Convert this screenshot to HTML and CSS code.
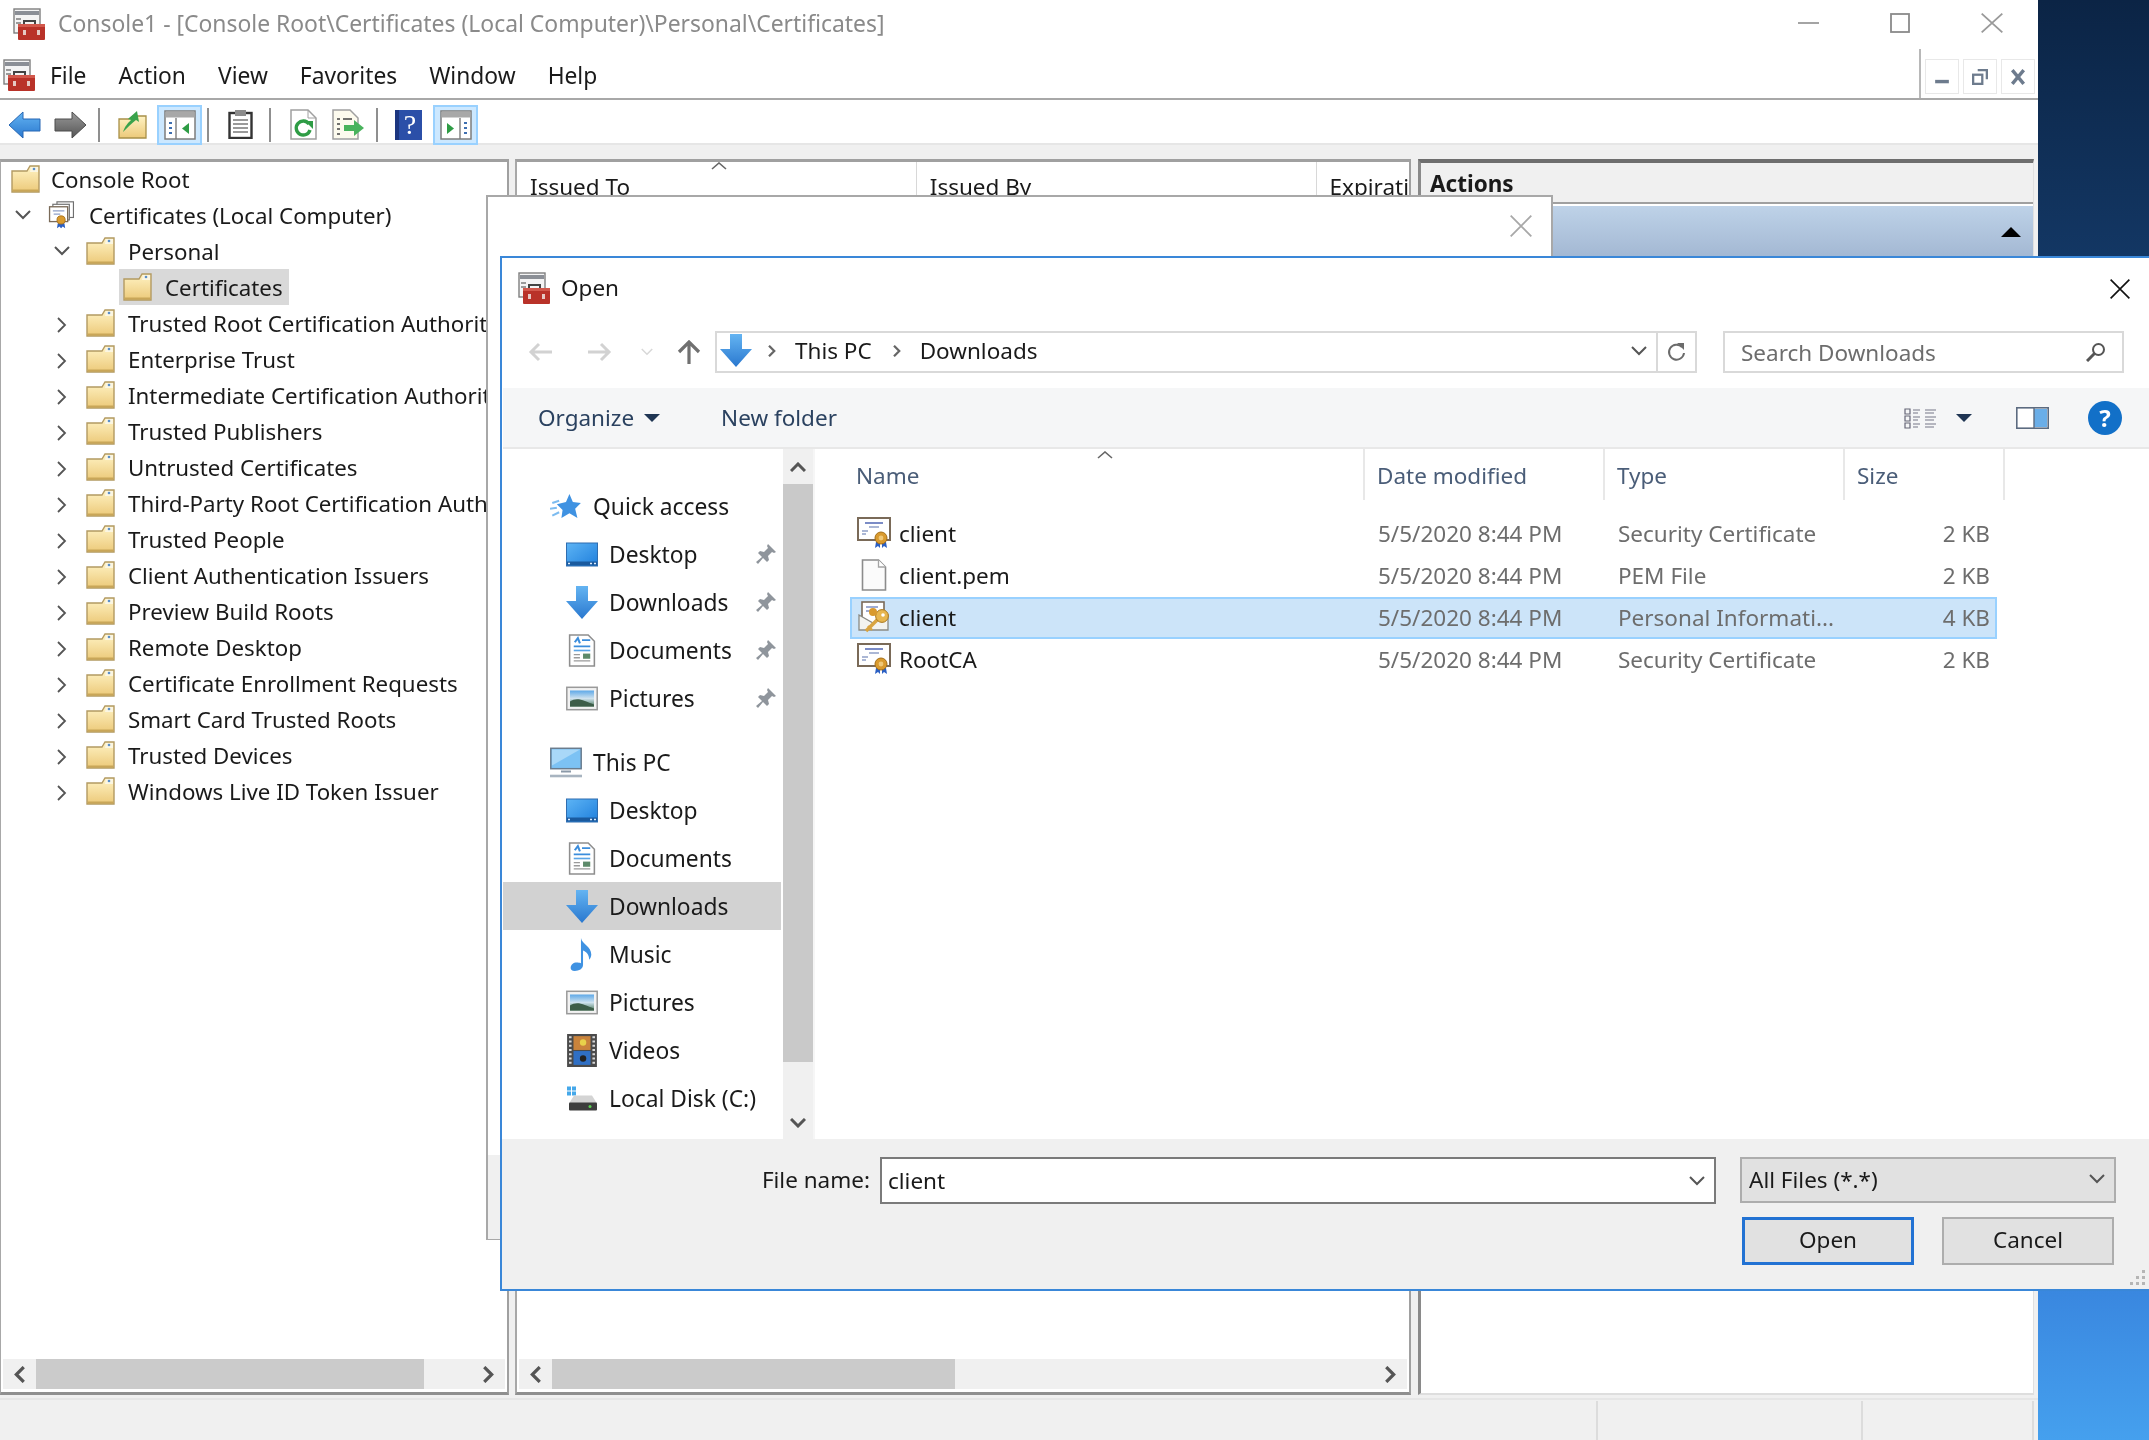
FILE: index.html
```html
<!DOCTYPE html>
<html lang="en">
<head>
    <meta charset="UTF-8">
    <title>Console1 - Open</title>
    <link rel="stylesheet" href="styles.css">
</head>
<body>
<!-- shared icons -->
<svg class="defs" xmlns="http://www.w3.org/2000/svg">
  <defs>
    <linearGradient id="gFolder" x1="0" y1="0" x2="0" y2="1"><stop offset="0" stop-color="#fff3c4"/><stop offset="1" stop-color="#ecc979"/></linearGradient>
    <linearGradient id="gScreen" x1="0" y1="0" x2="1" y2="1"><stop offset="0" stop-color="#5db4f5"/><stop offset="1" stop-color="#1f7fdc"/></linearGradient>
    <linearGradient id="gArrow" x1="0" y1="0" x2="0" y2="1"><stop offset="0" stop-color="#64b4f2"/><stop offset="1" stop-color="#2a78cf"/></linearGradient>
    <linearGradient id="gGrey" x1="0" y1="0" x2="0" y2="1"><stop offset="0" stop-color="#9a9a9a"/><stop offset="1" stop-color="#555"/></linearGradient>
    <linearGradient id="gSky" x1="0" y1="0" x2="0" y2="1"><stop offset="0" stop-color="#5da8e8"/><stop offset=".5" stop-color="#cfe2ee"/><stop offset="1" stop-color="#4d7a5c"/></linearGradient>
    <symbol id="toolbox" viewBox="0 0 33 33">
      <rect x="1" y="1" width="26" height="24" fill="#f4f4f4" stroke="#7f7f7f" stroke-width="1.4"/>
      <rect x="2" y="3" width="24" height="4" fill="#8b8f96"/>
      <rect x="3" y="10" width="5" height="2" fill="#9a9a9a"/><rect x="3" y="14" width="5" height="2" fill="#9a9a9a"/>
      <path d="M11 16v-3h11v3" fill="none" stroke="#444" stroke-width="2"/>
      <rect x="5" y="16" width="27" height="16" rx="1" fill="#b93229"/>
      <rect x="5" y="16" width="27" height="3" fill="#d2584c"/>
      <rect x="10" y="22" width="3" height="5" fill="#e6c9c4"/><rect x="24" y="22" width="3" height="5" fill="#e6c9c4"/>
    </symbol>
    <symbol id="folder" viewBox="0 0 29 28">
      <path d="M1 6h15l3-5h9v26H1z" fill="url(#gFolder)" stroke="#b39a62" stroke-width="1.4"/>
      <path d="M20 2h7v5h-8z" fill="#fbf6e2"/>
      <circle cx="23" cy="4" r="1.3" fill="#5b8fc9"/>
      <path d="M1.5 25.5h26" stroke="#c9a658" stroke-width="2"/>
    </symbol>
    <symbol id="cert" viewBox="0 0 34 32">
      <rect x="1" y="1" width="32" height="22" fill="#fff" stroke="#7a6a58" stroke-width="2"/>
      <path d="M8 6h18" stroke="#5a6fb8" stroke-width="1.6"/>
      <path d="M12 10h10M5 14h6M5 17h4" stroke="#90a0c8" stroke-width="1.4"/>
      <path d="M19 25l-1 6 3-2 2 2v-6zM25 25v6l2-2 3 2-1-6z" fill="#2a5fc4"/>
      <circle cx="24" cy="21" r="6" fill="#d99a2e" stroke="#a56e16"/>
      <circle cx="24" cy="21" r="2.4" fill="#f0c878"/>
    </symbol>
    <symbol id="certstack" viewBox="0 0 31 34">
      <rect x="10" y="1" width="20" height="19" fill="#fff" stroke="#6f6f6f" stroke-width="1.4"/>
      <rect x="5" y="4" width="20" height="19" fill="#fff" stroke="#6f6f6f" stroke-width="1.4"/>
      <rect x="1" y="7" width="22" height="18" fill="#fff" stroke="#7a6a58" stroke-width="1.6"/>
      <path d="M5 12h14M6 16h8" stroke="#8ea0c8" stroke-width="1.4"/>
      <path d="M11 27l-1 6 3-2 2 2 2-2 3 2-1-6z" fill="#2a5fc4"/>
      <circle cx="15" cy="23" r="5" fill="#d99a2e" stroke="#a56e16"/>
    </symbol>
    <symbol id="pfx" viewBox="0 0 34 32">
      <rect x="5" y="1" width="22" height="22" fill="#fff" stroke="#7a6a58" stroke-width="1.6"/>
      <path d="M9 6h12M9 10h8" stroke="#7e90c4" stroke-width="1.5"/>
      <path d="M2 14l14 8 15-8v15H2z" fill="#f3f3f0" stroke="#8a8a84" stroke-width="1.3"/>
      <path d="M9 30l13-13" stroke="#d9a441" stroke-width="3.6"/>
      <path d="M11 25l4 4" stroke="#d9a441" stroke-width="2.4"/>
      <circle cx="25" cy="15" r="6.4" fill="#e7b64f" stroke="#a9781f"/>
      <circle cx="26" cy="14" r="1.8" fill="#fff"/>
      <circle cx="16" cy="11" r="4" fill="#d99a2e"/>
    </symbol>
    <symbol id="page" viewBox="0 0 26 32">
      <path d="M1.5 1h16l7 7v23h-23z" fill="#fbfbfb" stroke="#8c8c8c" stroke-width="1.6"/>
      <path d="M17.5 1v7h7" fill="#fff" stroke="#a4a4a4" stroke-width="1.3"/>
    </symbol>
    <symbol id="dl" viewBox="0 0 32 33">
      <path d="M10 0h12v15h10L16 33 0 15h10z" fill="url(#gArrow)"/>
    </symbol>
    <symbol id="desk" viewBox="0 0 32 24">
      <rect x=".5" y=".5" width="31" height="23" fill="url(#gScreen)" stroke="#2f6db0"/>
      <rect x="1" y="19" width="30" height="4" fill="#1a5a9e"/>
      <path d="M2 21h2M24 21h2M28 21h2" stroke="#dcecff" stroke-width="1.4"/>
    </symbol>
    <symbol id="docs" viewBox="0 0 26 32">
      <path d="M1 1h18l6 6v24H1z" fill="#fff" stroke="#8e8e8e" stroke-width="1.5"/>
      <path d="M6 8l3-4 2 5" fill="none" stroke="#3b8ddc" stroke-width="2"/>
      <path d="M13 6h8M5 12h16" stroke="#3b8ddc" stroke-width="1.6"/>
      <path d="M5 16h16" stroke="#5aa5e6" stroke-width="1.6"/>
      <path d="M5 20h6M5 23h6M5 26h16" stroke="#9a9a9a" stroke-width="1.3"/>
      <rect x="14" y="19" width="7" height="5" fill="#5d8a6a"/>
    </symbol>
    <symbol id="pics" viewBox="0 0 32 24">
      <rect x=".8" y=".8" width="30.4" height="22.4" fill="#f2f2f2" stroke="#9a9a9a" stroke-width="1.5"/>
      <rect x="4" y="4" width="24" height="16" fill="url(#gSky)"/>
      <path d="M4 15c7-5 14-1 24 3v2H4z" fill="#3d5d48"/>
    </symbol>
    <symbol id="pc" viewBox="0 0 32 30">
      <rect x=".8" y=".8" width="30.4" height="20.4" fill="#7cc2f4" stroke="#6a7c8e" stroke-width="1.5"/>
      <path d="M2 2h28L2 18z" fill="#a9d8f8"/>
      <path d="M11 24h10" stroke="#8a99a8" stroke-width="2"/>
      <path d="M0 28.500h32" stroke="#a8b4c0" stroke-width="2.600"/>
    </symbol>
    <symbol id="note" viewBox="0 0 24 32">
      <path d="M11 0c1 6 10 8 10 16 0 2-1 4-2 5 0-5-3-8-6-9v14c0 4-4 6-8 6-3 0-4-2-4-3 0-4 4-6 8-5 1 0 1 0 2 .5z" fill="#3f92e2"/>
    </symbol>
    <symbol id="film" viewBox="0 0 28 31">
      <rect x="0" y="0" width="28" height="31" fill="#4a4a4a"/>
      <path d="M3 2v27M25 2v27" stroke="#d8d8d8" stroke-width="2.400" stroke-dasharray="2 2"/>
      <rect x="6" y="2" width="16" height="13" fill="#c9833c"/><rect x="6" y="16" width="16" height="13" fill="#2f6fc4"/>
      <circle cx="15" cy="8" r="3" fill="#e8d24a"/><circle cx="15" cy="23" r="3" fill="#222"/>
    </symbol>
    <symbol id="disk" viewBox="0 0 32 26">
      <path d="M1 1h4v4H1zM6 1h4v4H6zM1 6h4v4H1zM6 6h4v4H6z" fill="#45a8ea"/>
      <path d="M8 10h18l5 8H3z" fill="#d4d4d4"/>
      <rect x="3" y="17" width="28" height="8" rx="1" fill="#3d3d3d"/>
      <circle cx="24" cy="21" r="1.500" fill="#58d24f"/>
    </symbol>
    <symbol id="star" viewBox="0 0 28 24">
      <path d="M17 1l3 7 7 1-5 5 2 8-7-4-7 4 1-7-5-5 8-2z" fill="#3f92e2"/>
      <path d="M2 9l6-2M0 14l6-1M2 20l6-3" stroke="#7dbcf0" stroke-width="1.800"/>
    </symbol>
    <symbol id="pin" viewBox="0 0 20 20">
      <path d="M12 0l8 8-2 1-2-1-4 4 1 4-2 2-4-4-5 6-2-2 6-5-4-4 2-2 4 1 4-4-1-2z" fill="#8f959c"/>
    </symbol>
    <symbol id="panel" viewBox="0 0 32 30">
      <rect x="1" y="1" width="30" height="28" fill="#fff" stroke="#7c7c7c" stroke-width="1.500"/>
      <rect x="1.500" y="1.500" width="29" height="6" fill="#a8a8a8"/>
      <path d="M12 8v21" stroke="#7c7c7c" stroke-width="1.400"/>
      <path d="M5 13h3M5 18h3M5 23h3" stroke="#3f6fb0" stroke-width="2"/>
      <path d="M25 13v11l-7-5.500z" fill="#2e9c45"/>
    </symbol>
    <symbol id="panelr" viewBox="0 0 32 30">
      <rect x="1" y="1" width="30" height="28" fill="#fff" stroke="#7c7c7c" stroke-width="1.500"/>
      <rect x="1.500" y="1.500" width="29" height="6" fill="#a8a8a8"/>
      <path d="M20 8v21" stroke="#7c7c7c" stroke-width="1.400"/>
      <path d="M24 13h3M24 18h3M24 23h3" stroke="#3f6fb0" stroke-width="2"/>
      <path d="M7 13v11l7-5.500z" fill="#2e9c45"/>
    </symbol>
    <symbol id="back" viewBox="0 0 33 28">
      <path d="M15 1v7h17v12H15v7L1 14z" fill="url(#gArrow)" stroke="#2767b4"/>
    </symbol>
    <symbol id="forward" viewBox="0 0 33 28">
      <path d="M18 1v7H1v12h17v7l14-13z" fill="url(#gGrey)" stroke="#4c4c4c"/>
    </symbol>
    <symbol id="upfolder" viewBox="0 0 29 29">
      <path d="M1 9h10l4-3h13v22H1z" fill="url(#gFolder)" stroke="#a89048" stroke-width="1.300"/>
      <path d="M5 22c2-6 5-9 8-12l-3-1 9-8 2 11-3-2c-4 3-8 7-13 12z" fill="#3aa34c"/>
    </symbol>
    <symbol id="clip" viewBox="0 0 25 29">
      <rect x="1.500" y="3" width="22" height="25" fill="#fff" stroke="#333" stroke-width="2.400"/>
      <rect x="7" y="0" width="11" height="6" fill="#8d8d8d"/>
      <path d="M5 10h15M5 14h15M5 18h15M5 22h15" stroke="#9a9a9a" stroke-width="2"/>
    </symbol>
    <symbol id="refresh" viewBox="0 0 27 31">
      <path d="M1 1h17l8 8v21H1z" fill="#fff" stroke="#a0a0a0" stroke-width="1.500"/>
      <path d="M18 1v8h8" fill="none" stroke="#a0a0a0"/>
      <path d="M19 15a7 7 0 1 0 1 6" fill="none" stroke="#2e9c45" stroke-width="3.400"/>
      <path d="M15 12h8v8z" fill="#2e9c45"/>
    </symbol>
    <symbol id="export" viewBox="0 0 33 31">
      <path d="M1 1h17l8 8v21H1z" fill="#fdfbee" stroke="#a0a0a0" stroke-width="1.500"/>
      <path d="M5 10h3M11 10h9M5 15h3M5 20h3M5 25h3" stroke="#444" stroke-width="1.600"/>
      <path d="M12 16h10v-5l10 8-10 8v-5H12z" fill="#49b35c"/>
    </symbol>
    <symbol id="helpbook" viewBox="0 0 27 30">
      <rect x="0" y="0" width="27" height="30" fill="#2b4fa8"/>
      <rect x="0" y="0" width="4" height="30" fill="#1c3680"/>
      <text x="15" y="24" font-family="Liberation Serif, serif" font-size="28" fill="#fff" text-anchor="middle">?</text>
    </symbol>
    <symbol id="x" viewBox="0 0 16 16" preserveAspectRatio="none"><path d="M.5.500l15 15M15.500.500l-15 15" fill="none" stroke="currentColor" stroke-width="1.300"/></symbol>
    <symbol id="chev-d" viewBox="0 0 16 10"><path d="M1 1l7 7 7-7" fill="none" stroke="currentColor" stroke-width="2"/></symbol>
    <symbol id="chev-r" viewBox="0 0 10 16"><path d="M1 1l7 7-7 7" fill="none" stroke="currentColor" stroke-width="1.800"/></symbol>
    <symbol id="chev-l" viewBox="0 0 10 16"><path d="M9 1L2 8l7 7" fill="none" stroke="currentColor" stroke-width="3"/></symbol>
    <symbol id="chev-rb" viewBox="0 0 10 16"><path d="M1 1l7 7-7 7" fill="none" stroke="currentColor" stroke-width="3"/></symbol>
    <symbol id="chev-u" viewBox="0 0 16 10"><path d="M1 9l7-7 7 7" fill="none" stroke="currentColor" stroke-width="3"/></symbol>
    <symbol id="chev-db" viewBox="0 0 16 10"><path d="M1 1l7 7 7-7" fill="none" stroke="currentColor" stroke-width="3"/></symbol>
  </defs>
</svg>

<div class="desktop">

  <!-- main mmc window -->
  <div class="mmc">
    <div class="titlebar">
      <svg class="ico-33"><use href="#toolbox"/></svg>
      <span class="title-text">Console1 - [Console Root\Certificates (Local Computer)\Personal\Certificates]</span>
      <div class="win-controls">
        <svg class="ctl ctl-min" viewBox="0 0 21 20"><path d="M0 10h21" stroke="#9a9a9a" stroke-width="1.800"/></svg>
        <svg class="ctl" viewBox="0 0 20 20" preserveAspectRatio="none"><rect x="1" y="1" width="18" height="18" fill="none" stroke="#8a8a8a" stroke-width="1.800"/></svg>
        <svg class="ctl ctl-x"><use href="#x"/></svg>
      </div>
    </div>

    <div class="menubar">
      <svg class="ico-33 menu-ico"><use href="#toolbox"/></svg>
      <nav class="menu">
        <span>File</span><span>Action</span><span>View</span><span>Favorites</span><span>Window</span><span>Help</span>
      </nav>
      <div class="mdi">
        <div class="mdi-btn"><svg viewBox="0 0 14 14"><path d="M1 11h12" stroke="#6d7b8d" stroke-width="3"/></svg></div>
        <div class="mdi-btn"><svg viewBox="0 0 14 14"><rect x="1" y="5" width="8" height="8" fill="none" stroke="#6d7b8d" stroke-width="2"/><path d="M5 1h8v8" fill="none" stroke="#6d7b8d" stroke-width="2"/></svg></div>
        <div class="mdi-btn"><svg viewBox="0 0 14 14"><path d="M2 1l10 12M12 1L2 13" stroke="#6d7b8d" stroke-width="3"/></svg></div>
      </div>
    </div>

    <div class="toolbar">
      <svg class="tb-arrow"><use href="#back"/></svg>
      <svg class="tb-arrow"><use href="#forward"/></svg>
      <i class="tb-sep"></i>
      <svg class="tb-up"><use href="#upfolder"/></svg>
      <div class="tb-on"><svg><use href="#panel"/></svg></div>
      <i class="tb-sep"></i>
      <svg class="tb-clip"><use href="#clip"/></svg>
      <i class="tb-sep"></i>
      <svg class="tb-refresh"><use href="#refresh"/></svg>
      <svg class="tb-export"><use href="#export"/></svg>
      <i class="tb-sep"></i>
      <svg class="tb-help"><use href="#helpbook"/></svg>
      <div class="tb-on"><svg><use href="#panelr"/></svg></div>
    </div>

    <div class="workspace">
      <section class="pane tree-pane">
        <div class="tree">
          <div class="tree-row lvl0"><div class="node"><svg class="ico-folder"><use href="#folder"/></svg><span>Console Root</span></div></div>
          <div class="tree-row lvl1"><svg class="exp exp-open"><use href="#chev-d"/></svg><div class="node"><svg class="ico-folder"><use href="#certstack"/></svg><span>Certificates (Local Computer)</span></div></div>
          <div class="tree-row lvl2"><svg class="exp exp-open"><use href="#chev-d"/></svg><div class="node"><svg class="ico-folder"><use href="#folder"/></svg><span>Personal</span></div></div>
          <div class="tree-row lvl3"><div class="node selected"><svg class="ico-folder"><use href="#folder"/></svg><span>Certificates</span></div></div>
          <div class="tree-row lvl2"><svg class="exp"><use href="#chev-r"/></svg><div class="node"><svg class="ico-folder"><use href="#folder"/></svg><span>Trusted Root Certification Authorities</span></div></div>
          <div class="tree-row lvl2"><svg class="exp"><use href="#chev-r"/></svg><div class="node"><svg class="ico-folder"><use href="#folder"/></svg><span>Enterprise Trust</span></div></div>
          <div class="tree-row lvl2"><svg class="exp"><use href="#chev-r"/></svg><div class="node"><svg class="ico-folder"><use href="#folder"/></svg><span>Intermediate Certification Authorities</span></div></div>
          <div class="tree-row lvl2"><svg class="exp"><use href="#chev-r"/></svg><div class="node"><svg class="ico-folder"><use href="#folder"/></svg><span>Trusted Publishers</span></div></div>
          <div class="tree-row lvl2"><svg class="exp"><use href="#chev-r"/></svg><div class="node"><svg class="ico-folder"><use href="#folder"/></svg><span>Untrusted Certificates</span></div></div>
          <div class="tree-row lvl2"><svg class="exp"><use href="#chev-r"/></svg><div class="node"><svg class="ico-folder"><use href="#folder"/></svg><span>Third-Party Root Certification Authorities</span></div></div>
          <div class="tree-row lvl2"><svg class="exp"><use href="#chev-r"/></svg><div class="node"><svg class="ico-folder"><use href="#folder"/></svg><span>Trusted People</span></div></div>
          <div class="tree-row lvl2"><svg class="exp"><use href="#chev-r"/></svg><div class="node"><svg class="ico-folder"><use href="#folder"/></svg><span>Client Authentication Issuers</span></div></div>
          <div class="tree-row lvl2"><svg class="exp"><use href="#chev-r"/></svg><div class="node"><svg class="ico-folder"><use href="#folder"/></svg><span>Preview Build Roots</span></div></div>
          <div class="tree-row lvl2"><svg class="exp"><use href="#chev-r"/></svg><div class="node"><svg class="ico-folder"><use href="#folder"/></svg><span>Remote Desktop</span></div></div>
          <div class="tree-row lvl2"><svg class="exp"><use href="#chev-r"/></svg><div class="node"><svg class="ico-folder"><use href="#folder"/></svg><span>Certificate Enrollment Requests</span></div></div>
          <div class="tree-row lvl2"><svg class="exp"><use href="#chev-r"/></svg><div class="node"><svg class="ico-folder"><use href="#folder"/></svg><span>Smart Card Trusted Roots</span></div></div>
          <div class="tree-row lvl2"><svg class="exp"><use href="#chev-r"/></svg><div class="node"><svg class="ico-folder"><use href="#folder"/></svg><span>Trusted Devices</span></div></div>
          <div class="tree-row lvl2"><svg class="exp"><use href="#chev-r"/></svg><div class="node"><svg class="ico-folder"><use href="#folder"/></svg><span>Windows Live ID Token Issuer</span></div></div>
        </div>
        <div class="hscroll">
          <div class="hs-btn"><svg><use href="#chev-l"/></svg></div>
          <div class="hs-thumb thumb-tree"></div>
          <div class="hs-track"></div>
          <div class="hs-btn"><svg><use href="#chev-rb"/></svg></div>
        </div>
      </section>

      <section class="pane center-pane">
        <div class="cert-head">
          <span class="ch-col ch-to">Issued To</span>
          <span class="ch-col ch-by">Issued By</span>
          <span class="ch-col ch-exp">Expirati</span>
          <svg class="ch-caret" viewBox="0 0 16 8"><path d="M1 7l7-6 7 6" fill="none" stroke="#666" stroke-width="1.600"/></svg>
        </div>
        <div class="hscroll">
          <div class="hs-btn"><svg><use href="#chev-l"/></svg></div>
          <div class="hs-thumb thumb-center"></div>
          <div class="hs-track"></div>
          <div class="hs-btn"><svg><use href="#chev-rb"/></svg></div>
        </div>
      </section>

      <section class="pane actions-pane">
        <div class="actions-head">Actions</div>
        <div class="actions-band"><i class="band-tri"></i></div>
      </section>
    </div>

    <div class="statusbar"><i class="st-1"></i><i class="st-2"></i><i class="st-3"></i></div>
  </div>

  <!-- certificate import wizard, behind the open dialog -->
  <div class="wizard">
    <div class="wizard-head"><svg class="wizard-x"><use href="#x"/></svg></div>
    <div class="wizard-foot"></div>
  </div>

  <!-- open file dialog -->
  <div class="dialog">
    <div class="dlg-title">
      <svg class="ico-33"><use href="#toolbox"/></svg>
      <span>Open</span>
      <svg class="dlg-x"><use href="#x"/></svg>
    </div>

    <div class="dlg-nav">
      <svg class="nav-arrow" viewBox="0 0 24 20"><path d="M24 10H3M11 2l-8 8 8 8" fill="none" stroke="#d2d2d2" stroke-width="3"/></svg>
      <svg class="nav-arrow" viewBox="0 0 24 20"><path d="M0 10h21M13 2l8 8-8 8" fill="none" stroke="#d2d2d2" stroke-width="3"/></svg>
      <svg class="nav-down"><use href="#chev-d"/></svg>
      <svg class="nav-up" viewBox="0 0 24 24"><path d="M12 24V3M2 12l10-10 10 10" fill="none" stroke="#707070" stroke-width="3.200"/></svg>
      <div class="address">
        <svg class="addr-ico"><use href="#dl"/></svg>
        <svg class="addr-chev"><use href="#chev-rb"/></svg>
        <span class="addr-pc">This PC</span>
        <svg class="addr-chev"><use href="#chev-rb"/></svg>
        <span>Downloads</span>
        <svg class="addr-drop"><use href="#chev-d"/></svg>
        <div class="addr-refresh">
          <svg viewBox="0 0 20 20"><path d="M15 5a7.500 7.500 0 1 0 2 6" fill="none" stroke="#6b6b6b" stroke-width="2"/><path d="M10 1h7v7z" fill="#6b6b6b"/></svg>
        </div>
      </div>
      <div class="search">
        <span>Search Downloads</span>
        <svg viewBox="0 0 20 20"><circle cx="12.500" cy="7.500" r="5.500" fill="none" stroke="#555" stroke-width="2"/><path d="M8.500 11.500L1 19" stroke="#555" stroke-width="3"/></svg>
      </div>
    </div>

    <div class="cmdbar">
      <span class="cmd">Organize</span><i class="cmd-tri"></i>
      <span class="cmd cmd-new">New folder</span>
      <div class="cmd-right">
        <svg class="view-ico" viewBox="0 0 33 22">
          <path d="M1 2h5v5H1zM1 9h5v5H1zM1 16h5v5H1z" fill="none" stroke="#667" stroke-width="1.200"/>
          <path d="M9 3h7M9 6h5M9 10h7M9 13h5M9 17h7M9 20h5M21 3h11M21 6h9M21 10h11M21 13h9M21 17h11M21 20h9" stroke="#778" stroke-width="1.200"/>
        </svg>
        <i class="cmd-tri cmd-tri-view"></i>
        <svg class="pane-ico" viewBox="0 0 33 22"><rect x=".800" y=".800" width="31.400" height="20.400" fill="#fff" stroke="#5c6b80" stroke-width="1.600"/><rect x="18" y="2" width="13" height="18" fill="#6aaee8"/><path d="M18 1v20" stroke="#5c6b80" stroke-width="1.400"/></svg>
        <div class="help-dot">?</div>
      </div>
    </div>

    <div class="dlg-main">
      <aside class="navpane">
        <div class="nav-list">
          <div class="nav-item top"><svg class="ico-nav"><use href="#star"/></svg><span>Quick access</span></div>
          <div class="nav-item"><svg class="ico-nav"><use href="#desk"/></svg><span>Desktop</span><svg class="pin"><use href="#pin"/></svg></div>
          <div class="nav-item"><svg class="ico-nav"><use href="#dl"/></svg><span>Downloads</span><svg class="pin"><use href="#pin"/></svg></div>
          <div class="nav-item"><svg class="ico-nav"><use href="#docs"/></svg><span>Documents</span><svg class="pin"><use href="#pin"/></svg></div>
          <div class="nav-item"><svg class="ico-nav"><use href="#pics"/></svg><span>Pictures</span><svg class="pin"><use href="#pin"/></svg></div>
          <div class="nav-item top group"><svg class="ico-nav"><use href="#pc"/></svg><span>This PC</span></div>
          <div class="nav-item"><svg class="ico-nav"><use href="#desk"/></svg><span>Desktop</span></div>
          <div class="nav-item"><svg class="ico-nav"><use href="#docs"/></svg><span>Documents</span></div>
          <div class="nav-item current"><svg class="ico-nav"><use href="#dl"/></svg><span>Downloads</span></div>
          <div class="nav-item"><svg class="ico-nav"><use href="#note"/></svg><span>Music</span></div>
          <div class="nav-item"><svg class="ico-nav"><use href="#pics"/></svg><span>Pictures</span></div>
          <div class="nav-item"><svg class="ico-nav"><use href="#film"/></svg><span>Videos</span></div>
          <div class="nav-item"><svg class="ico-nav"><use href="#disk"/></svg><span>Local Disk (C:)</span></div>
        </div>
        <div class="vscroll">
          <div class="vs-btn"><svg><use href="#chev-u"/></svg></div>
          <div class="vs-thumb"></div>
          <div class="vs-btn vs-end"><svg><use href="#chev-db"/></svg></div>
        </div>
      </aside>

      <div class="files">
        <div class="file-head">
          <span class="fh fh-name">Name</span>
          <span class="fh">Date modified</span>
          <span class="fh">Type</span>
          <span class="fh">Size</span>
          <svg class="fh-caret" viewBox="0 0 16 8"><path d="M1 7l7-6 7 6" fill="none" stroke="#666" stroke-width="1.600"/></svg>
        </div>
        <div class="file-row"><div class="f-name"><svg class="ico-file"><use href="#cert"/></svg><span>client</span></div><span class="f-cell">5/5/2020 8:44 PM</span><span class="f-cell">Security Certificate</span><span class="f-size">2 KB</span></div>
        <div class="file-row"><div class="f-name"><svg class="ico-file"><use href="#page"/></svg><span>client.pem</span></div><span class="f-cell">5/5/2020 8:44 PM</span><span class="f-cell">PEM File</span><span class="f-size">2 KB</span></div>
        <div class="file-row selected-file"><div class="f-name"><svg class="ico-file"><use href="#pfx"/></svg><span>client</span></div><span class="f-cell">5/5/2020 8:44 PM</span><span class="f-cell">Personal Informati...</span><span class="f-size">4 KB</span></div>
        <div class="file-row"><div class="f-name"><svg class="ico-file"><use href="#cert"/></svg><span>RootCA</span></div><span class="f-cell">5/5/2020 8:44 PM</span><span class="f-cell">Security Certificate</span><span class="f-size">2 KB</span></div>
      </div>
    </div>

    <div class="dlg-foot">
      <div class="foot-row">
        <label class="fname-label">File name:</label>
        <div class="fname-input"><span>client</span><svg><use href="#chev-d"/></svg></div>
        <div class="filter"><span>All Files (*.*)</span><svg><use href="#chev-d"/></svg></div>
      </div>
      <div class="foot-row foot-btns">
        <button class="btn btn-default">Open</button>
        <button class="btn">Cancel</button>
      </div>
      <svg class="grip" viewBox="0 0 15 17"><path d="M12 1h3v3h-3zM12 7h3v3h-3zM6 7h3v3H6zM12 13h3v3h-3zM6 13h3v3H6zM0 13h3v3H0z" fill="#b5b5b5"/></svg>
    </div>
  </div>
</div>
</body>
</html>
```
FILE: styles.css
```css
/* page */
html, body {
    margin: 0;
    padding: 0;
    overflow: hidden;
}

body {
    font-family: "Noto Sans", "Open Sans", sans-serif;
    font-size: 22.5px;
    color: #1a1a1a;
}

.defs {
    display: block;
    width: 0;
    height: 0;
}

svg {
    display: block;
    flex: none;
}

.desktop {
    position: relative;
    width: 2149px;
    height: 1440px;
    overflow: hidden;
    background: linear-gradient(180deg, #0b2445 0%, #133764 18%, #1e5aa0 55%, #3a88e0 90%, #45a0ee 100%);
    filter: blur(.45px); /* the screenshot is a soft upscale */
}

.ico-33 { width: 33px; height: 33px; }

/* main window */
.mmc {
    position: absolute;
    left: 0;
    top: 0;
    width: 2038px;
    height: 1440px;
    display: flex;
    flex-direction: column;
    background: #fff;
}

.titlebar {
    height: 49px;
    display: flex;
    align-items: center;
    padding-left: 13px;
    flex: none;
}

.title-text {
    margin-left: 12px;
    margin-bottom: 2px;
    color: #8a8a8a;
    font-size: 22.9px;
}

.win-controls {
    margin-left: auto;
    display: flex;
    gap: 71px;
    padding-right: 35px;
    align-items: center;
    margin-bottom: 3px;
}

.ctl {
    width: 20px;
    height: 20px;
}

.ctl-min {
    width: 21px;
}

.ctl-x {
    width: 22px;
    height: 20px;
    color: #9a9a9a;
}

.menubar {
    height: 51px;
    flex: none;
    display: flex;
    align-items: center;
    position: relative;
    box-sizing: border-box;
    border-bottom: 2px solid #a8a8a8;
}

.menu-ico {
    margin-left: 3px;
    margin-top: 4px;
}

.menu {
    display: flex;
    gap: 32px;
    margin-left: 14px;
    margin-top: 3px;
    font-size: 22.8px;
}

.mdi {
    margin-left: auto;
    display: flex;
    gap: 4px;
    align-self: stretch;
    align-items: flex-end;
    padding: 0 3px 4px 4px;
    border-left: 2px solid #b8b8b8;
    background: #fff;
}

.mdi-btn {
    width: 34px;
    height: 35px;
    box-sizing: border-box;
    border: 1px solid #e8e8e8;
    display: flex;
    align-items: center;
    justify-content: center;
}

.mdi-btn svg {
    width: 16px;
    height: 16px;
}

.toolbar {
    height: 45px;
    flex: none;
    box-sizing: border-box;
    border-bottom: 2px solid #e6e6e6;
    display: flex;
    align-items: center;
    padding: 6px 0 0 8px;
}

.tb-arrow { width: 33px; height: 28px; margin-right: 13px; }
.tb-sep { width: 2px; height: 34px; background: #8f8f8f; flex: none; margin: 0 11px 0 0; }
.tb-arrow + .tb-sep { margin-left: -2px; margin-right: 18px; }
.tb-up { width: 29px; height: 29px; margin-right: 10px; }
.tb-on {
    width: 45px;
    height: 40px;
    box-sizing: border-box;
    background: #cce8ff;
    border: 2px solid #99d1ff;
    display: flex;
    align-items: center;
    justify-content: center;
    margin-right: 5px;
}
.tb-on svg { width: 32px; height: 30px; }
.tb-on + .tb-sep { margin-right: 19px; }
.tb-clip { width: 25px; height: 29px; margin-right: 16px; }
.tb-clip + .tb-sep { margin-right: 19px; }
.tb-refresh { width: 27px; height: 31px; margin-right: 15px; }
.tb-export { width: 33px; height: 31px; margin-right: 11px; }
.tb-export + .tb-sep { margin-right: 17px; }
.tb-help { width: 27px; height: 30px; margin-right: 11px; }

.workspace {
    flex: 1;
    display: flex;
    background: #f0f0f0;
    padding: 14px 4px 3px 0;
    min-height: 0;
}

.pane {
    box-sizing: border-box;
    background: #fff;
    display: flex;
    flex-direction: column;
    border-top: 3px solid #a0a0a0;
    border-right: 2px solid #a0a0a0;
    border-bottom: 3px solid #8f8f8f;
    border-left: 1px solid #a8a8a8;
    overflow: hidden;
}

.tree-pane { width: 509px; }
.center-pane { width: 896px; margin-left: 6px; border-left-width: 2px; }
.actions-pane {
    flex: 1;
    margin-left: 7px;
    border-top: 4px solid #6e6e6e;
    border-left: 3px solid #8a8a8a;
    border-right: 1px solid #e0e0e0;
    border-bottom: 2px solid #dedede;
}

/* tree */
.tree {
    flex: 1;
    margin-top: -1px;
    white-space: nowrap;
    font-size: 22.3px;
}

.tree-row {
    height: 36px;
    display: flex;
    align-items: center;
}

.lvl0 { padding-left: 6px; }
.lvl1 { padding-left: 14px; }
.lvl2 { padding-left: 53px; }
.lvl3 { padding-left: 118px; }

.exp {
    width: 16px;
    height: 16px;
    margin-right: 14px;
    margin-top: 3px;
    color: #555;
}

.exp-open {
    height: 10px;
    margin-top: 0;
}

.node {
    display: flex;
    align-items: center;
    gap: 13px;
    height: 36px;
    padding: 0 4px;
    margin-left: -2px;
}

.lvl0 .node { margin-left: 0; gap: 11px; }

.node.selected {
    background: #d9d9d9;
    padding-right: 6px;
    margin-left: 0;
}

.ico-folder {
    width: 29px;
    height: 28px;
}

/* scrollbars */
.hscroll {
    flex: none;
    height: 30px;
    margin: 0 2px 3px 2px;
    display: flex;
    background: #f0f0f0;
}

.hs-btn {
    width: 33px;
    display: flex;
    align-items: center;
    justify-content: center;
    color: #555;
}

.hs-btn svg {
    width: 11px;
    height: 17px;
}

.hs-thumb {
    background: #cbcbcb;
}

.thumb-tree { width: 388px; }
.thumb-center { width: 403px; }
.hs-track { flex: 1; }

/* certificate list header */
.cert-head {
    flex: 1;
    display: flex;
    position: relative;
    align-items: flex-start;
    white-space: nowrap;
}

.ch-col {
    box-sizing: border-box;
    height: 42px;
    padding: 9px 0 0 13px;
    border-right: 1px solid #d8d8d8;
}

.ch-to { width: 400px; }
.ch-by { width: 400px; }
.ch-exp { border-right: 0; }

.ch-caret {
    position: absolute;
    left: 194px;
    top: 0;
    width: 16px;
    height: 8px;
}

/* actions */
.actions-head {
    height: 41px;
    box-sizing: border-box;
    padding: 5px 0 0 9px;
    font-weight: bold;
    background: #f0f0f0;
    border-bottom: 2px solid #a0a0a0;
    flex: none;
}

.actions-band {
    height: 51px;
    margin-top: 2px;
    flex: none;
    background: linear-gradient(180deg, #bed2e8, #a3b8d3);
    display: flex;
    align-items: center;
    justify-content: flex-end;
    padding-right: 12px;
}

.band-tri {
    width: 0;
    height: 0;
    border-left: 10px solid transparent;
    border-right: 10px solid transparent;
    border-bottom: 10px solid #000;
}

.statusbar {
    height: 42px;
    flex: none;
    display: flex;
    background: #f0f0f0;
    padding-top: 1px;
    box-sizing: border-box;
    border-top: 2px solid #e6e6e6;
}

.statusbar i { display: block; box-sizing: border-box; border-right: 2px solid #dcdcdc; }
.st-1 { width: 1598px; }
.st-2 { width: 265px; }
.st-3 { width: 171px; }

/* wizard behind */
.wizard {
    position: absolute;
    left: 486px;
    top: 195px;
    width: 1067px;
    height: 1045px;
    box-sizing: border-box;
    border: 2px solid #a8a8a8;
    border-bottom-width: 1px;
    background: #fff;
    display: flex;
    flex-direction: column;
}

.wizard-head {
    flex: 1;
    display: flex;
    justify-content: flex-end;
    padding: 18px 19px 0 0;
}

.wizard-x {
    width: 22px;
    height: 22px;
    color: #a8a8a8;
}

.wizard-foot {
    height: 84px;
    background: #f0f0f0;
    flex: none;
}

/* open dialog */
.dialog {
    position: absolute;
    left: 500px;
    top: 256px;
    width: 1649px;
    height: 1035px;
    box-sizing: border-box;
    border: 2px solid #3a87d8;
    border-right: 0;
    background: #fff;
    display: flex;
    flex-direction: column;
}

.dlg-title {
    height: 73px;
    flex: none;
    display: flex;
    align-items: center;
    padding: 0 19px 12px 16px;
    box-sizing: border-box;
    gap: 10px;
}

.dlg-title span {
    margin-bottom: 2px;
}

.dlg-x {
    margin-left: auto;
    width: 20px;
    height: 20px;
    color: #111;
}

.dlg-nav {
    height: 42px;
    flex: none;
    display: flex;
    align-items: center;
    padding-left: 26px;
}

.nav-arrow {
    width: 24px;
    height: 20px;
    margin-right: 36px;
}

.nav-down {
    width: 12px;
    height: 8px;
    color: #d8d8d8;
    margin-left: -7px;
    margin-right: 24px;
}

.nav-up {
    width: 24px;
    height: 24px;
    margin-right: 14px;
}

.address {
    width: 982px;
    height: 42px;
    box-sizing: border-box;
    border: 2px solid #d9d9d9;
    display: flex;
    align-items: center;
    padding: 0 0 3px 3px;
    flex: none;
}

.addr-ico {
    width: 32px;
    height: 33px;
}

.addr-chev {
    width: 8px;
    height: 12px;
    color: #666;
    margin: 0 19px 0 16px;
}

.addr-pc {
    margin-right: 5px;
}

.addr-drop {
    margin-left: auto;
    width: 16px;
    height: 10px;
    color: #555;
    margin-right: 9px;
}

.addr-refresh {
    width: 37px;
    align-self: stretch;
    border-left: 2px solid #d9d9d9;
    margin-bottom: -3px;
    display: flex;
    align-items: center;
    justify-content: center;
}

.addr-refresh svg {
    width: 20px;
    height: 20px;
}

.search {
    margin-left: 26px;
    width: 401px;
    height: 42px;
    box-sizing: border-box;
    border: 2px solid #d9d9d9;
    display: flex;
    align-items: center;
    padding: 0 16px;
    justify-content: space-between;
    color: #6d6d6d;
    flex: none;
}

.search svg {
    width: 20px;
    height: 20px;
}

.cmdbar {
    margin-top: 15px;
    margin-left: 1px;
    height: 61px;
    flex: none;
    box-sizing: border-box;
    background: #f5f6f7;
    border-bottom: 2px solid #e8e8e8;
    display: flex;
    align-items: center;
    padding-left: 35px;
}

.cmd {
    color: #2b4260;
}

.cmd-tri {
    width: 0;
    height: 0;
    border-left: 8px solid transparent;
    border-right: 8px solid transparent;
    border-top: 8px solid #1f3553;
    margin-left: 10px;
}

.cmd-new {
    margin-left: 61px;
}

.cmd-right {
    margin-left: auto;
    display: flex;
    align-items: center;
    padding-right: 27px;
}

.view-ico {
    width: 33px;
    height: 22px;
}

.cmd-tri-view {
    margin-left: 19px;
    margin-right: 44px;
}

.pane-ico {
    width: 33px;
    height: 22px;
    margin-right: 39px;
}

.help-dot {
    width: 34px;
    height: 34px;
    border-radius: 50%;
    background: #1270c8;
    color: #fff;
    font-weight: bold;
    font-size: 24px;
    line-height: 34px;
    text-align: center;
}

.dlg-main {
    flex: 1;
    display: flex;
    min-height: 0;
}

/* dialog navigation pane */
.navpane {
    width: 310px;
    flex: none;
    display: flex;
    position: relative;
}

.nav-list {
    width: 278px;
    margin-left: 1px;
    padding-top: 33px;
    flex: none;
}

.nav-item {
    height: 48px;
    display: flex;
    align-items: center;
    padding-left: 63px;
    gap: 11px;
    font-size: 22.8px;
}

.nav-item.top {
    padding-left: 47px;
}

.nav-item.group {
    margin-top: 16px;
}

.nav-item.current {
    background: #d2d2d2;
}

.ico-nav {
    width: 32px;
    height: 33px;
}

.pin {
    width: 20px;
    height: 20px;
    margin-left: auto;
    margin-right: 5px;
}

.vscroll {
    width: 30px;
    margin-left: 2px;
    background: #f0f0f0;
    display: flex;
    flex-direction: column;
    flex: none;
}

.vs-btn {
    height: 35px;
    display: flex;
    align-items: center;
    justify-content: center;
    color: #555;
    flex: none;
}

.vs-btn svg {
    width: 16px;
    height: 10px;
}

.vs-thumb {
    height: 578px;
    background: #c9c9c9;
}

.vs-end {
    margin-top: auto;
    padding-top: 28px;
    height: 60px;
    box-sizing: border-box;
}

/* file list */
.files {
    flex: 1;
    padding-left: 35px;
    border-left: 3px solid #f6f6f6;
}

.file-head,
.file-row {
    display: grid;
    grid-template-columns: 515px 240px 240px 152px;
    width: 1147px;
}

.file-head {
    grid-template-columns: 515px 240px 240px 160px;
    width: 1155px;
    height: 51px;
    margin-bottom: 13px;
    position: relative;
    color: #4a5d78;
}

.fh {
    box-sizing: border-box;
    padding: 11px 0 0 12px;
    border-right: 2px solid #e8e8e8;
}

.fh-name {
    padding-left: 6px;
}

.fh-caret {
    position: absolute;
    left: 247px;
    top: 2px;
    width: 16px;
    height: 8px;
}

.file-row {
    height: 42px;
    box-sizing: border-box;
    align-items: center;
    border: 2px solid transparent;
    padding-bottom: 2px;
    color: #6d6d6d;
}

.selected-file {
    background: #cce4f9;
    border-color: #99d1ff;
}

.f-name {
    display: flex;
    align-items: center;
    gap: 8px;
    padding-left: 5px;
    color: #1a1a1a;
}

.ico-file {
    width: 34px;
    height: 32px;
}

.f-cell {
    padding-left: 11px;
}

.f-size {
    text-align: right;
    padding-right: 9px;
}

/* footer */
.dlg-foot {
    height: 150px;
    flex: none;
    background: #f0f0f0;
    padding-top: 18px;
    box-sizing: border-box;
    position: relative;
}

.foot-row {
    display: flex;
    align-items: flex-start;
}

.fname-label {
    width: 368px;
    text-align: right;
    margin-right: 10px;
    padding-top: 7px;
}

.fname-input,
.filter {
    height: 47px;
    box-sizing: border-box;
    display: flex;
    align-items: center;
    justify-content: space-between;
    padding: 0 9px 0 6px;
}

.fname-input {
    width: 836px;
    background: #fff;
    border: 2px solid #7a7a7a;
}

.filter {
    width: 376px;
    height: 46px;
    margin-left: 24px;
    background: #e1e1e1;
    border: 2px solid #adadad;
    padding: 0 9px 2px 7px;
}

.fname-input svg,
.filter svg {
    width: 16px;
    height: 10px;
    color: #555;
}

.foot-btns {
    justify-content: flex-end;
    gap: 28px;
    margin-top: 13px;
    padding-right: 35px;
}

.btn {
    width: 172px;
    height: 48px;
    box-sizing: border-box;
    background: #e1e1e1;
    border: 2px solid #adadad;
    font: inherit;
    color: #1a1a1a;
    padding: 0 0 4px;
}

.btn-default {
    border: 3px solid #2272d3;
}

.grip {
    position: absolute;
    right: 4px;
    bottom: 3px;
    width: 15px;
    height: 17px;
}
```
